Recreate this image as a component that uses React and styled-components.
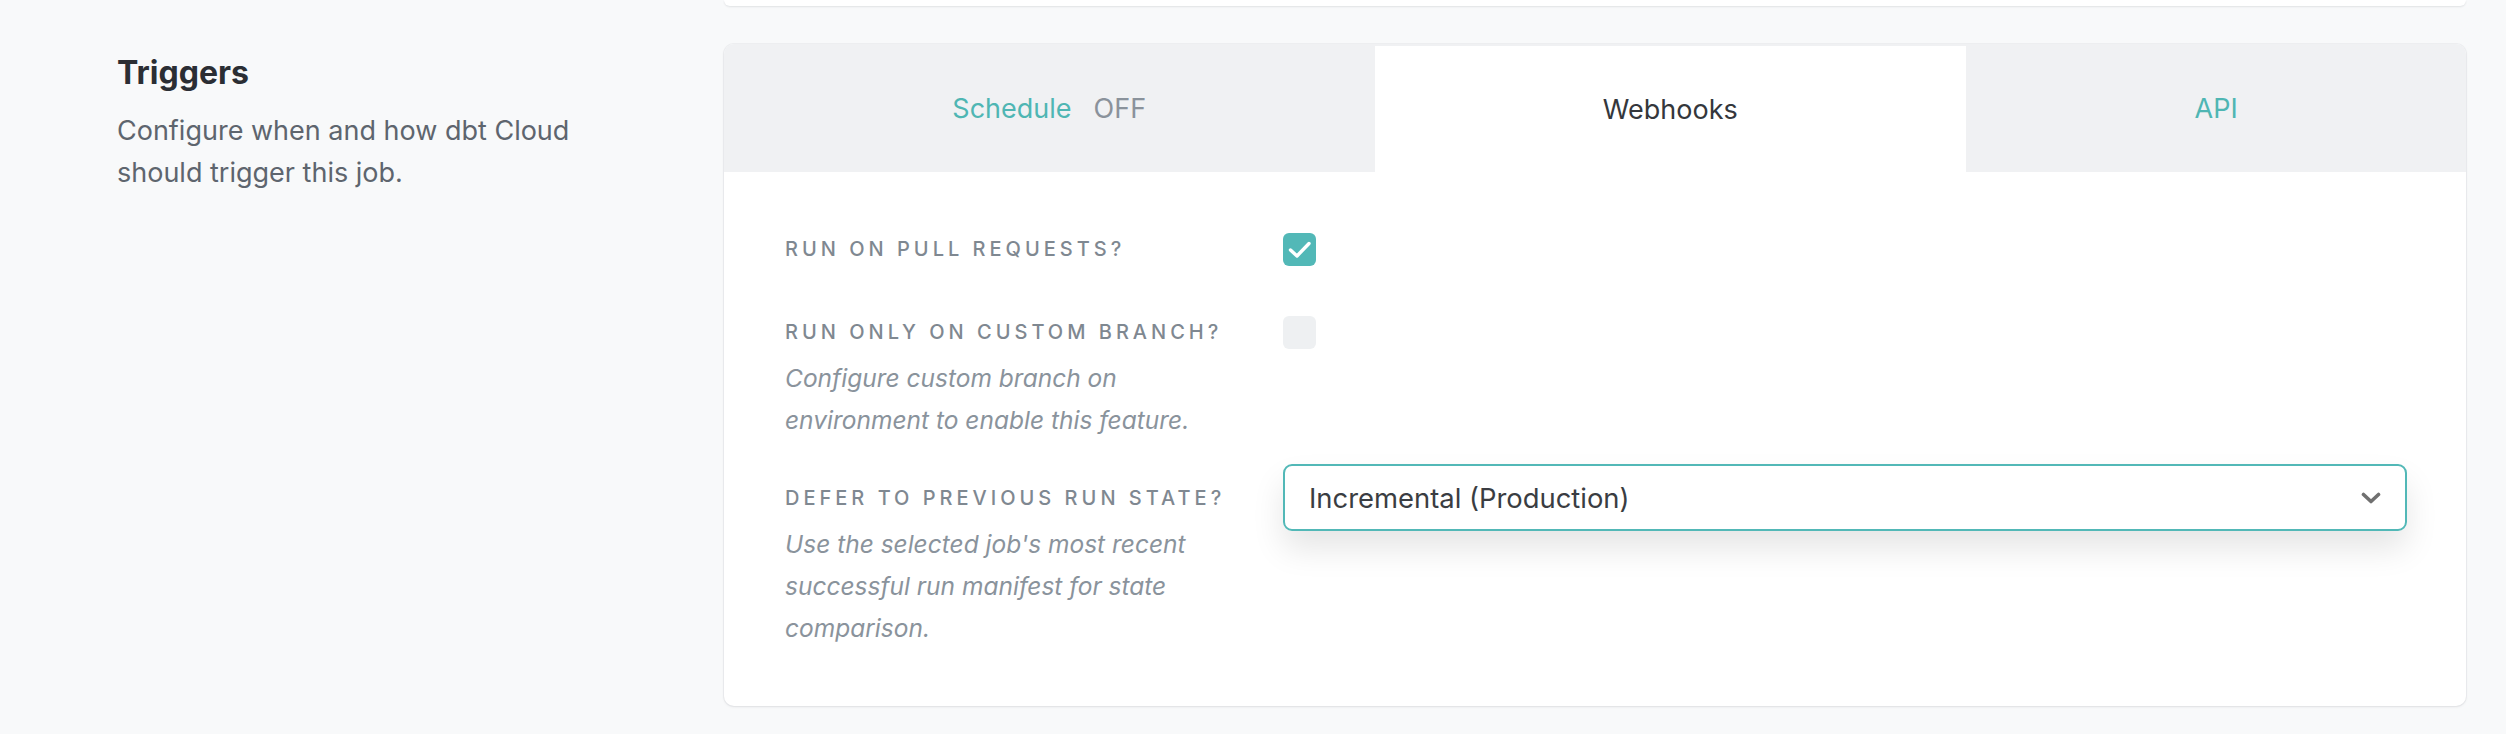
import React from 'react';
import styled, { createGlobalStyle } from 'styled-components';

const GlobalStyle = createGlobalStyle`
  html, body {
    margin: 0;
    padding: 0;
    background: #f8f9fa;
    font-family: Inter, "Noto Sans", sans-serif;
  }
`;

const Page = styled.div`
  width: 2506px;
  height: 734px;
  overflow: hidden;
`;

const PrevCard = styled.div`
  margin-left: 724px;
  width: 1742px;
  height: 6px;
  background: #ffffff;
  border-radius: 0 0 10px 10px;
  box-shadow: 0 1px 2px rgba(20, 30, 40, 0.1);
`;

const Section = styled.section`
  display: flex;
  margin-top: 38px;
`;

const Aside = styled.div`
  box-sizing: border-box;
  width: 724px;
  padding: 10px 140px 0 117px;
`;

const Title = styled.h2`
  margin: 0 0 18px;
  font-size: 32px;
  line-height: 38px;
  font-weight: 700;
  color: #2b2e34;
`;

const Description = styled.p`
  margin: 0;
  font-size: 27px;
  line-height: 42px;
  color: #5e656e;
`;

const Card = styled.div`
  width: 1742px;
  height: 662px;
  box-sizing: border-box;
  background: #ffffff;
  border-radius: 10px;
  box-shadow: 0 0 0 1px rgba(20, 30, 40, 0.04), 0 1px 3px rgba(20, 30, 40, 0.08);
  overflow: hidden;
`;

const Tabs = styled.div`
  display: flex;
  height: 128px;
  background: #f0f1f3;
`;

const Tab = styled.div`
  flex: 1 1 auto;
  display: flex;
  align-items: center;
  justify-content: center;
  gap: 22px;
  font-size: 27px;
  color: ${p => (p.active ? '#34373c' : '#4fb6b3')};
  background: ${p => (p.active ? '#ffffff' : 'transparent')};
  margin-top: ${p => (p.active ? '2px' : '0')};
`;

const Off = styled.span`
  color: #8a929b;
`;

const Body = styled.div`
  padding: 61px 58px 0 61px;
  display: flex;
  flex-direction: column;
  gap: 41px;
`;

const Row = styled.div`
  display: grid;
  grid-template-columns: 498px 1fr;
  align-items: start;
  margin-bottom: ${p => p.extra || 0}px;
`;

const LabelBlock = styled.div`
  display: flex;
  flex-direction: column;
`;

const Label = styled.div`
  font-size: 20px;
  line-height: 33px;
  letter-spacing: 0.2em;
  text-transform: uppercase;
  color: #7f8891;
  font-weight: 500;
`;

const Help = styled.div`
  margin-top: 8px;
  font-size: 24.5px;
  line-height: 42px;
  font-style: italic;
  color: #8a939c;
`;

const Box = styled.div`
  width: 33px;
  height: 33px;
  border-radius: 6px;
  background: ${p => (p.checked ? '#52b8b7' : '#eef0f2')};
`;

const Select = styled.div`
  box-sizing: border-box;
  height: 67px;
  margin-top: -18px;
  margin-right: 1px;
  border: 2px solid #52b8b7;
  border-radius: 9px;
  display: flex;
  align-items: center;
  justify-content: space-between;
  padding: 0 24px 0 24px;
  font-size: 27.4px;
  color: #3a3d42;
  box-shadow: 0 18px 32px rgba(0, 0, 0, 0.1);
`;

const Checkbox = ({ checked }) => (
  <Box checked={checked}>
    {checked && (
      <svg width="33" height="33" viewBox="0 0 33 33" fill="none" stroke="#fff" strokeWidth="3.4" strokeLinecap="round" strokeLinejoin="round">
        <polyline points="7.5 17 14 23 26 10.5" />
      </svg>
    )}
  </Box>
);

export default function App() {
  return (
    <Page>
      <GlobalStyle />
      <PrevCard />
      <Section>
        <Aside>
          <Title>Triggers</Title>
          <Description>Configure when and how dbt Cloud should trigger this job.</Description>
        </Aside>
        <Card>
          <Tabs>
            <Tab>
              <span>Schedule</span>
              <Off>OFF</Off>
            </Tab>
            <Tab active>Webhooks</Tab>
            <Tab>API</Tab>
          </Tabs>
          <Body>
            <Row extra={9}>
              <Label>Run on pull requests?</Label>
              <Checkbox checked />
            </Row>
            <Row>
              <LabelBlock>
                <Label>Run only on custom branch?</Label>
                <Help>Configure custom branch on<br />environment to enable this feature.</Help>
              </LabelBlock>
              <Checkbox />
            </Row>
            <Row>
              <LabelBlock>
                <Label>Defer to previous run state?</Label>
                <Help>Use the selected job's most recent<br />successful run manifest for state<br />comparison.</Help>
              </LabelBlock>
              <Select>
                <span>Incremental (Production)</span>
                <svg width="20" height="12" viewBox="0 0 20 12" fill="none" stroke="#707070" strokeWidth="3.6" strokeLinecap="round" strokeLinejoin="round">
                  <polyline points="2.5 2.5 10 9.5 17.5 2.5" />
                </svg>
              </Select>
            </Row>
          </Body>
        </Card>
      </Section>
    </Page>
  );
}
